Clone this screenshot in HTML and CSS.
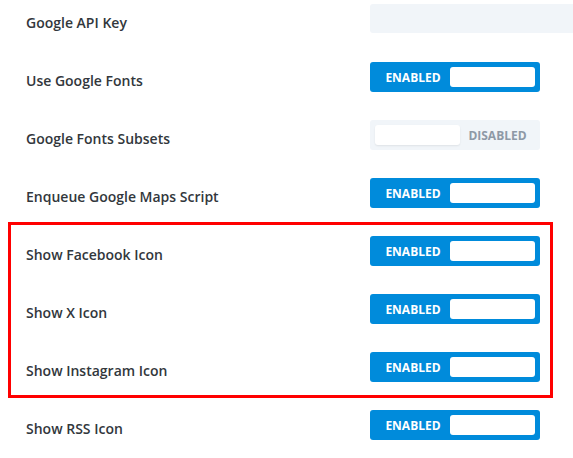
FILE: index.html
```html
<!DOCTYPE html>
<html lang="en">
<head>
<meta charset="utf-8">
<title>Settings</title>
<link rel="stylesheet" href="styles.css">
</head>
<body>
<div class="settings">
  <div class="row">
    <div class="label">Google API Key</div>
    <div class="control"><input class="text-input" type="text" aria-label="Google API Key"></div>
  </div>
  <div class="row">
    <div class="label">Use Google Fonts</div>
    <div class="control"><div class="toggle on"><span class="state">ENABLED</span><span class="knob"></span></div></div>
  </div>
  <div class="row">
    <div class="label">Google Fonts Subsets</div>
    <div class="control"><div class="toggle off"><span class="knob"></span><span class="state">DISABLED</span></div></div>
  </div>
  <div class="row">
    <div class="label">Enqueue Google Maps Script</div>
    <div class="control"><div class="toggle on"><span class="state">ENABLED</span><span class="knob"></span></div></div>
  </div>
  <div class="group highlighted">
    <div class="row">
      <div class="label">Show Facebook Icon</div>
      <div class="control"><div class="toggle on"><span class="state">ENABLED</span><span class="knob"></span></div></div>
    </div>
    <div class="row">
      <div class="label">Show X Icon</div>
      <div class="control"><div class="toggle on"><span class="state">ENABLED</span><span class="knob"></span></div></div>
    </div>
    <div class="row">
      <div class="label">Show Instagram Icon</div>
      <div class="control"><div class="toggle on"><span class="state">ENABLED</span><span class="knob"></span></div></div>
    </div>
  </div>
  <div class="row">
    <div class="label">Show RSS Icon</div>
    <div class="control"><div class="toggle on"><span class="state">ENABLED</span><span class="knob"></span></div></div>
  </div>
</div>
</body>
</html>
```

FILE: styles.css
```css
html, body {
  margin: 0;
  padding: 0;
  background: #ffffff;
}

body {
  font-family: "Open Sans", "Noto Sans", sans-serif;
  overflow: hidden;
}

.settings {
  display: flex;
  flex-direction: column;
}

.row {
  display: flex;
  align-items: flex-start;
  height: 58px;
}

.label {
  width: 344px;
  padding-left: 26px;
  padding-top: 13px;
  font-size: 14px;
  line-height: 20px;
  font-weight: 600;
  color: #32373c;
}

.control {
  padding-top: 4px;
  flex: 1;
}

.text-input {
  display: block;
  width: 203px;
  height: 29px;
  box-sizing: border-box;
  border: none;
  border-radius: 3px 0 0 3px;
  background: #f1f5f9;
  padding: 0 10px;
  margin: 0;
}

.toggle {
  display: flex;
  align-items: center;
  width: 170px;
  height: 30px;
  box-sizing: border-box;
  border-radius: 3px;
  padding: 5px;
}

.toggle.on {
  background: #008bdb;
}

.toggle.off {
  background: #f1f5f9;
}

.state {
  flex: 1;
  text-align: center;
  font-size: 12px;
  font-weight: 700;
  letter-spacing: 0;
}

.toggle.on .state {
  color: #ffffff;
  padding-left: 1px;
}

.toggle.off .state {
  color: #8e99a6;
}

.knob {
  display: block;
  width: 85px;
  height: 20px;
  border-radius: 3px;
  background: #ffffff;
}

.toggle.off .knob {
  box-shadow: 0 1px 2px rgba(0, 0, 0, 0.08);
}

.group {
  display: flex;
  flex-direction: column;
}

.highlighted {
  position: relative;
}

.highlighted::after {
  content: "";
  position: absolute;
  left: 8px;
  right: 20px;
  top: -10px;
  bottom: 8px;
  border: 3px solid #ff0000;
  pointer-events: none;
}
```
